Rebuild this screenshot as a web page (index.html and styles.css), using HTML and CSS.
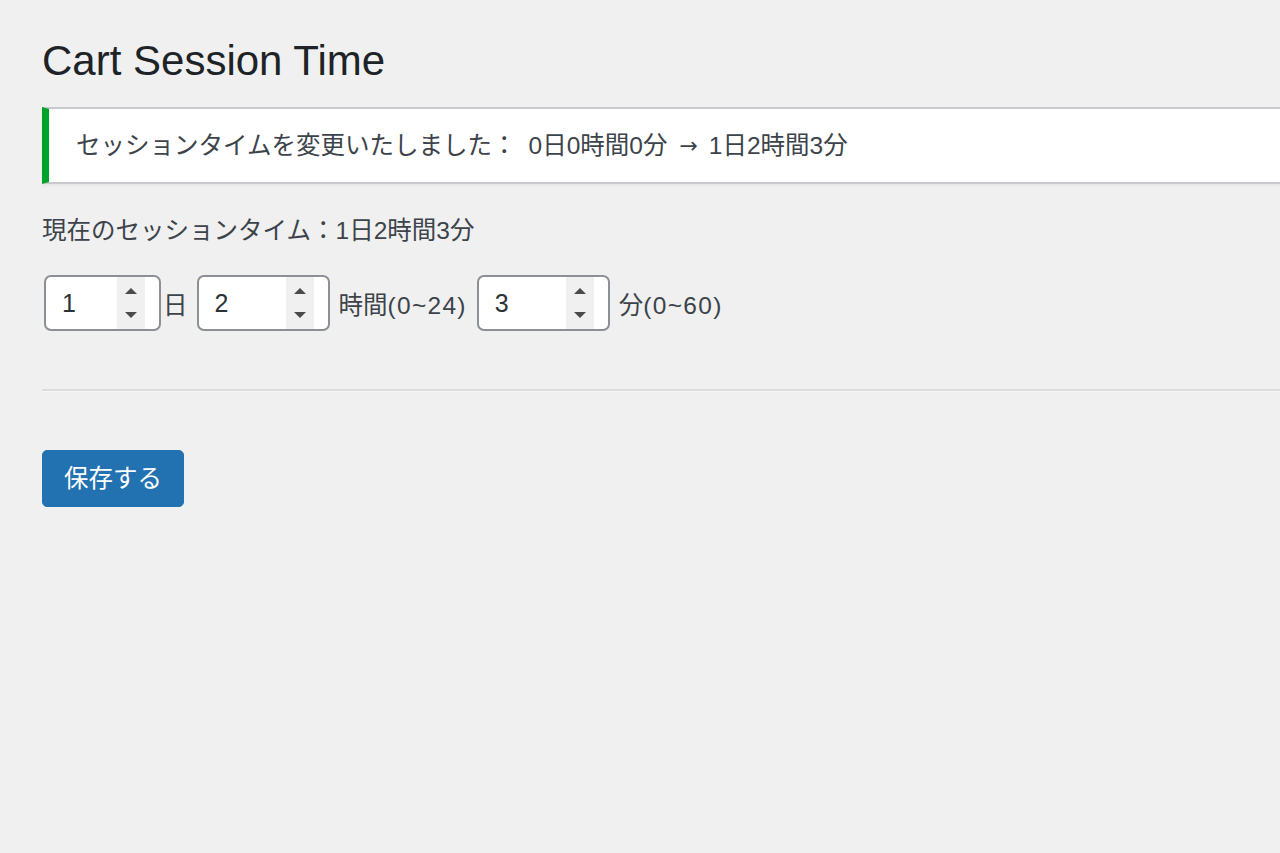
FILE: index.html
```html
<!DOCTYPE html>
<html lang="ja">
<head>
<meta charset="utf-8">
<title>Cart Session Time</title>
<link rel="stylesheet" href="styles.css">
</head>
<body>
<div class="wrap">
  <h1 class="title">Cart Session Time</h1>
  <div class="notice"><p class="notice-text">セッションタイムを変更いたしました：<span class="gap"></span>0日0時間0分<span class="arrow">→</span>1日2時間3分</p></div>
  <form class="form">
    <p class="current">現在のセッションタイム：1日2時間3分</p>
    <div class="row">
      <div class="num num-sm">
        <input class="num-input" type="text" value="1" aria-label="日">
        <span class="spin"><span class="tri tri-up"></span><span class="tri tri-down"></span></span>
      </div>
      <span class="unit unit-first">日</span>
      <div class="num num-lg">
        <input class="num-input" type="text" value="2" aria-label="時間">
        <span class="spin"><span class="tri tri-up"></span><span class="tri tri-down"></span></span>
      </div>
      <span class="unit">時間<span class="range">(0~24)</span></span>
      <div class="num num-lg">
        <input class="num-input" type="text" value="3" aria-label="分">
        <span class="spin"><span class="tri tri-up"></span><span class="tri tri-down"></span></span>
      </div>
      <span class="unit">分<span class="range">(0~60)</span></span>
    </div>
    <hr class="sep">
    <button class="btn" type="button">保存する</button>
  </form>
</div>
</body>
</html>
```
FILE: styles.css
```css
html, body {
  margin: 0;
  padding: 0;
  background: #f0f0f1;
}

body {
  font-family: "Liberation Sans", "Noto Sans CJK JP", sans-serif;
  font-size: 24.5px;
  color: #3c434a;
  overflow: hidden;
}

.wrap {
  box-sizing: border-box;
  width: 1400px;
  padding-left: 42px;
}

.title {
  margin: 37px 0 0;
  font-size: 42px;
  line-height: 48px;
  font-weight: 400;
  color: #1d2327;
}

.notice {
  margin-top: 22px;
  background: #fff;
  border: 2px solid #c8c9cc;
  border-left: 7px solid #00a32a;
  box-shadow: 0 2px 2px rgba(0, 0, 0, 0.04);
}

.notice-text {
  margin: 0;
  padding: 18px 27px;
  height: 37px;
  line-height: 37px;
  white-space: nowrap;
}

.gap {
  display: inline-block;
  width: 12px;
}

.arrow {
  display: inline-block;
  font-family: "DejaVu Sans", sans-serif;
  font-size: 22px;
  line-height: 1;
  margin: 0 11px 0 12px;
  vertical-align: 1px;
}

.form {
  margin: 0;
}

.current {
  margin: 28px 0 0;
  line-height: 37px;
}

.row {
  display: flex;
  align-items: center;
  margin-top: 26px;
  height: 56px;
}

.num {
  box-sizing: border-box;
  display: flex;
  height: 56px;
  margin: 0 2px;
  padding: 0 14px 0 16px;
  background: #fff;
  border: 2px solid #8c8f94;
  border-radius: 7px;
}

.num-sm {
  width: 117px;
}

.num-lg {
  width: 133px;
}

.num-input {
  flex: 1;
  min-width: 0;
  border: 0;
  padding: 0;
  margin: 0;
  background: transparent;
  font-family: inherit;
  font-size: 25px;
  color: #2c3338;
  outline: none;
}

.spin {
  width: 28px;
  background: #f0f0f0;
  display: flex;
  flex-direction: column;
  align-items: center;
  justify-content: center;
  gap: 18px;
}

.tri {
  width: 0;
  height: 0;
  border-left: 6.5px solid transparent;
  border-right: 6.5px solid transparent;
}

.tri-up {
  border-bottom: 6px solid #4b4b4b;
}

.tri-down {
  border-top: 6px solid #4b4b4b;
}

.unit {
  margin: 0 8px 0 7px;
  white-space: nowrap;
}

.unit-first {
  margin: 0 7px 0 0;
}

.range {
  letter-spacing: 1.3px;
}

.sep {
  margin: 58px 0 0;
  height: 0;
  border: 0;
  border-top: 2px solid #dcdcde;
  border-bottom: 1px solid #f6f7f7;
}

.btn {
  display: block;
  margin-top: 58px;
  height: 57px;
  padding: 0 21px;
  background: #2271b1;
  border: 1px solid #2271b1;
  border-radius: 5px;
  color: #fff;
  font-family: inherit;
  font-size: 24.5px;
  line-height: 55px;
  cursor: pointer;
}
```
